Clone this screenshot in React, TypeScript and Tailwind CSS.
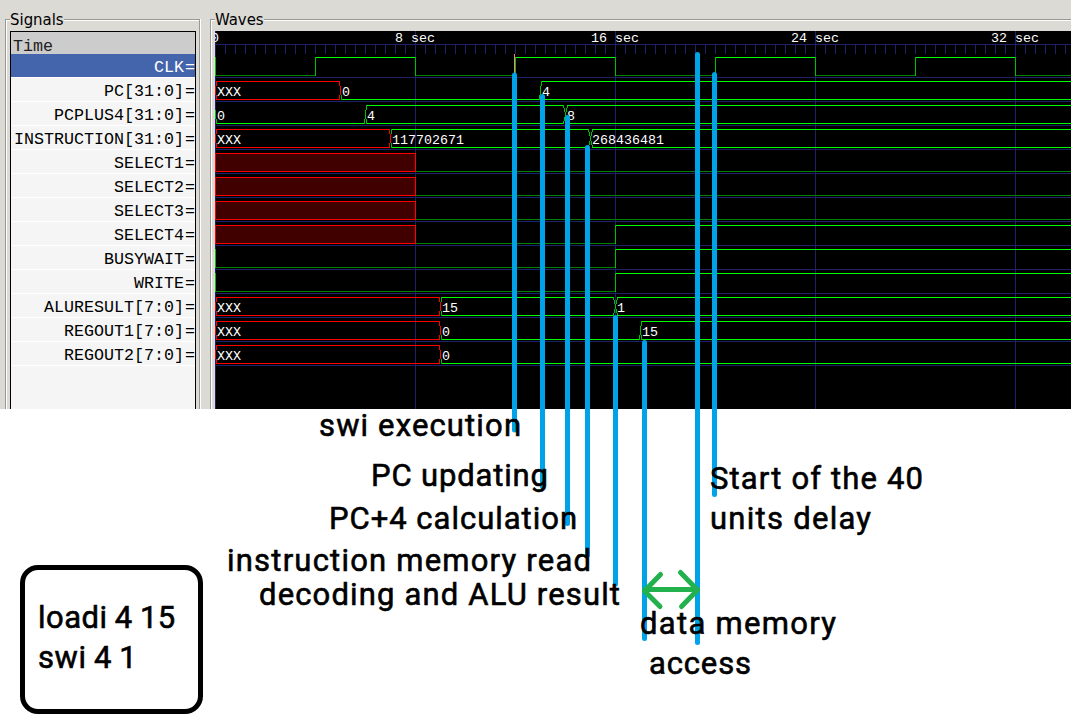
import React from "react";

const HIGH = "#00ff00";
const EDGE = "#00c000";
const LOW = "#008000";
const RED = "#ff0000";
const GRID = "#20206a";
const END = 1071;
const X0 = 215;

type BusChange = { at: number; text: string; zero?: boolean };
type Signal = {
  name: string;
  bits?: [number, 0 | 1][];
  unknownUntil?: number;
  bus?: BusChange[];
  startUnknown?: boolean;
};

const signals: Signal[] = [
  { name: "CLK", bits: [[215, 0], [315, 1], [415, 0], [515, 1], [615, 0], [715, 1], [815, 0], [915, 1], [1015, 0]] },
  { name: "PC[31:0]", startUnknown: true, bus: [{ at: 340, text: "0", zero: true }, { at: 540, text: "4" }] },
  { name: "PCPLUS4[31:0]", bus: [{ at: 365, text: "4" }, { at: 565, text: "8" }] },
  { name: "INSTRUCTION[31:0]", startUnknown: true, bus: [{ at: 390, text: "117702671" }, { at: 590, text: "268436481" }] },
  { name: "SELECT1", unknownUntil: 415, bits: [[415, 0]] },
  { name: "SELECT2", unknownUntil: 415, bits: [[415, 0]] },
  { name: "SELECT3", unknownUntil: 415, bits: [[415, 0]] },
  { name: "SELECT4", unknownUntil: 415, bits: [[415, 0], [615, 1]] },
  { name: "BUSYWAIT", bits: [[215, 0], [615, 1]] },
  { name: "WRITE", bits: [[215, 0], [615, 1]] },
  { name: "ALURESULT[7:0]", startUnknown: true, bus: [{ at: 440, text: "15" }, { at: 615, text: "1" }] },
  { name: "REGOUT1[7:0]", startUnknown: true, bus: [{ at: 440, text: "0", zero: true }, { at: 640, text: "15" }] },
  { name: "REGOUT2[7:0]", startUnknown: true, bus: [{ at: 440, text: "0", zero: true }] },
];

function H({ x1, x2, y, c }: { x1: number; x2: number; y: number; c: string }) {
  return <rect x={x1} y={y} width={x2 - x1 + 1} height={1} fill={c} />;
}
function V({ x, y1, y2, c }: { x: number; y1: number; y2: number; c: string }) {
  return <rect x={x} y={y1} width={1} height={y2 - y1 + 1} fill={c} />;
}

function BitTrace({ s, top }: { s: Signal; top: number }) {
  const bits = s.bits!;
  const u = s.unknownUntil;
  return (
    <g>
      {bits.map(([x, v], i) => {
        const next = i + 1 < bits.length ? bits[i + 1][0] : END;
        return <H key={x} x1={x} x2={next} y={v ? top : top + 18} c={v ? HIGH : LOW} />;
      })}
      {bits.map(([x], i) => (u && i === 0 ? null : <V key={x} x={x} y1={top} y2={top + 18} c={EDGE} />))}
      {u ? (
        <rect x={X0 + 0.5} y={top + 0.5} width={u - X0} height={18} fill="#400000" stroke={RED} strokeWidth={1} />
      ) : null}
    </g>
  );
}

function BusTrace({ s, top }: { s: Signal; top: number }) {
  const states = [
    { at: X0, text: s.startUnknown ? "XXX" : "0", zero: !s.startUnknown, unknown: !!s.startUnknown },
    ...s.bus!.map((b) => ({ at: b.at, text: b.text, zero: !!b.zero, unknown: false })),
  ];
  const bottom = top + 18;
  return (
    <g>
      {states.map((st, i) => {
        const next = states[i + 1];
        const cross = next && !st.zero && !st.unknown;
        const prev = states[i - 1];
        const fromCross = prev && !prev.zero && !prev.unknown;
        const a = st.at + (fromCross ? 2 : 1);
        const b = next ? next.at - (cross ? 2 : 1) : END;
        const c = st.unknown ? RED : HIGH;
        const e = st.unknown ? RED : EDGE;
        return (
          <g key={st.at}>
            {st.zero ? null : <H x1={a} x2={b} y={top} c={c} />}
            <H x1={a} x2={b} y={bottom} c={c} />
            {!fromCross && !st.zero ? <V x={a} y1={top} y2={top + 4} c={e} /> : null}
            {!fromCross ? <V x={a} y1={bottom - 4} y2={bottom} c={e} /> : null}
            {!prev ? <V x={a - 1} y1={top + 5} y2={bottom - 5} c={e} /> : null}
            {next && st.unknown ? (
              <>
                <V x={b} y1={top} y2={top + 4} c={RED} />
                <V x={b + 1} y1={top + 5} y2={bottom - 5} c={RED} />
                <V x={b} y1={bottom - 4} y2={bottom} c={RED} />
              </>
            ) : null}
            {next && st.zero ? (
              <>
                <V x={b} y1={bottom - 4} y2={bottom} c={EDGE} />
                <V x={b + 1} y1={top + 5} y2={bottom - 5} c={EDGE} />
              </>
            ) : null}
            {cross
              ? [-1, 1].map((d) => (
                  <g key={d}>
                    <V x={next.at + 2 * d} y1={top} y2={top + 2} c={EDGE} />
                    <V x={next.at + d} y1={top + 3} y2={top + 6} c={EDGE} />
                    <V x={next.at} y1={top + 7} y2={top + 11} c={EDGE} />
                    <V x={next.at + d} y1={top + 12} y2={top + 15} c={EDGE} />
                    <V x={next.at + 2 * d} y1={top + 16} y2={bottom} c={EDGE} />
                  </g>
                ))
              : null}
            <text x={st.at + 2} y={top + 15} fill="#fff">
              {st.text}
            </text>
          </g>
        );
      })}
    </g>
  );
}

function Waves() {
  const ticks = Array.from({ length: 85 }, (_, i) => 225 + i * 10);
  return (
    <svg
      width={856}
      height={378}
      viewBox="215 31 856 378"
      shapeRendering="crispEdges"
      className="block bg-black font-['Liberation_Mono',monospace] text-[13.333px]"
    >
      {[215, 415, 615, 815, 1015].map((x) => (
        <V key={x} x={x} y1={31} y2={409} c={GRID} />
      ))}
      <H x1={215} x2={END} y={44} c={GRID} />
      {ticks.map((x) => (
        <V key={x} x={x} y1={45} y2={53} c={GRID} />
      ))}
      {signals.map((s, i) => (
        <H key={s.name} x1={215} x2={END} y={77 + i * 24} c={GRID} />
      ))}
      {["0", "8 sec", "16 sec", "24 sec", "32 sec"].map((t, i) => (
        <text key={t} x={215 + i * 200 - t.length * 4} y={42} fill="#fff">
          {t}
        </text>
      ))}
      {signals.map((s, i) =>
        s.bus ? <BusTrace key={s.name} s={s} top={57 + i * 24} /> : <BitTrace key={s.name} s={s} top={57 + i * 24} />
      )}
      <V x={514} y1={54} y2={75} c="#ff8080" />
    </svg>
  );
}

const markers = [
  [514.5, 75, 430],
  [542.5, 96.5, 486.5],
  [567.5, 117.5, 523.5],
  [587.5, 147.5, 555],
  [615.5, 317.5, 584],
  [644.5, 342.5, 638.5],
  [697.5, 54.5, 642.5],
  [714.5, 74.5, 494.5],
];

const notes: [string, number, number, number][] = [
  ["swi execution", 319, 436, 202],
  ["PC updating", 371, 486, 177],
  ["PC+4 calculation", 329, 529, 248],
  ["instruction memory read", 227, 571, 364],
  ["decoding and ALU result", 259, 605, 361],
  ["Start of the 40", 710, 489, 213],
  ["units delay", 710, 529, 161],
  ["data memory", 640, 634, 196],
  ["access", 649, 674, 102],
];

function Annotations() {
  return (
    <svg width={1076} height={722} className="pointer-events-none absolute left-0 top-0 font-[Roboto,sans-serif] text-[31px]">
      <g stroke="#00a2e8" strokeWidth={5} strokeLinecap="round">
        {markers.map(([x, a, b]) => (
          <line key={x} x1={x} x2={x} y1={a} y2={b} />
        ))}
      </g>
      <g stroke="#22b14c" strokeWidth={5} strokeLinecap="round" strokeLinejoin="round" fill="none">
        <path d="M645 589.5H697" />
        <path d="M660.5 574.5L644.5 591L660 606.5" />
        <path d="M680.5 572.5L697.5 590L681.5 606.5" />
      </g>
      {notes.map(([t, x, y, w]) => (
        <text key={t} x={x} y={y} textLength={w} fill="#000" stroke="#000" strokeWidth={0.6}>
          {t}
        </text>
      ))}
    </svg>
  );
}

function Frame({ title, className, children }: { title: string; className: string; children: React.ReactNode }) {
  return (
    <section className={className}>
      <div className="flex h-[31px] items-start">
        <div className="mt-[19px] h-3 w-[5px] border-l border-t border-[#9a9892] shadow-[inset_1px_1px_0_#fff]" />
        <h2 className="mt-[8px] whitespace-nowrap font-['DejaVu_Sans_Condensed','DejaVu_Sans',sans-serif] text-[16.6px] font-normal leading-6 text-black [font-stretch:condensed]">
          {title}
        </h2>
        <div className="mt-[19px] h-px grow bg-[#9a9892] shadow-[0_1px_0_#fff]" />
      </div>
      {children}
    </section>
  );
}

export default function App() {
  return (
    <main className="relative h-[722px] w-[1076px] overflow-hidden bg-white">
      <div className="flex h-[409px] w-[1071px] overflow-hidden bg-[#dcdad5] pl-[5px]">
        <Frame title="Signals" className="w-[194px] shrink-0">
          <div className="flex h-[378px] border-l border-[#9a9892] shadow-[inset_1px_0_0_#fff]">
            <div className="ml-1 w-[186px] border-x border-t border-black bg-[#f5f5f5] font-['Liberation_Mono',monospace] text-[16.667px] text-black">
              <div className="h-[22px] bg-[#cccccc] pl-[2px] leading-[29px] text-[#202020]">Time</div>
              {signals.map((s, i) => (
                <div
                  key={s.name}
                  className={
                    i === 0
                      ? "flex h-6 justify-end border-b border-white bg-[#4464ac] leading-[28px] text-white"
                      : "flex h-6 justify-end border-b border-white leading-[28px]"
                  }
                >
                  <span>{s.name}</span>
                  <span className="ml-px w-[10px]">=</span>
                </div>
              ))}
            </div>
          </div>
        </Frame>
        <div className="mt-[19px] w-[2px] shrink-0 border-l border-[#9a9892] bg-white" />
        <Frame title="Waves" className="ml-[9px] w-[861px] shrink-0">
          <div className="flex h-[378px] border-l border-[#9a9892] pl-1 shadow-[inset_1px_0_0_#fff]">
            <Waves />
          </div>
        </Frame>
      </div>
      <div className="ml-5 mt-[156px] h-[149px] w-[183px] rounded-[18px] border-[5px] border-black pl-[13px] pt-[28px] font-[Roboto,sans-serif] text-[31px] leading-10 text-black [-webkit-text-stroke:0.6px_black]">
        <p className="tracking-[0.5px] [word-spacing:-1px]">loadi 4 15</p>
        <p className="tracking-[0.6px] [word-spacing:-1px]">swi 4 1</p>
      </div>
      <Annotations />
    </main>
  );
}
